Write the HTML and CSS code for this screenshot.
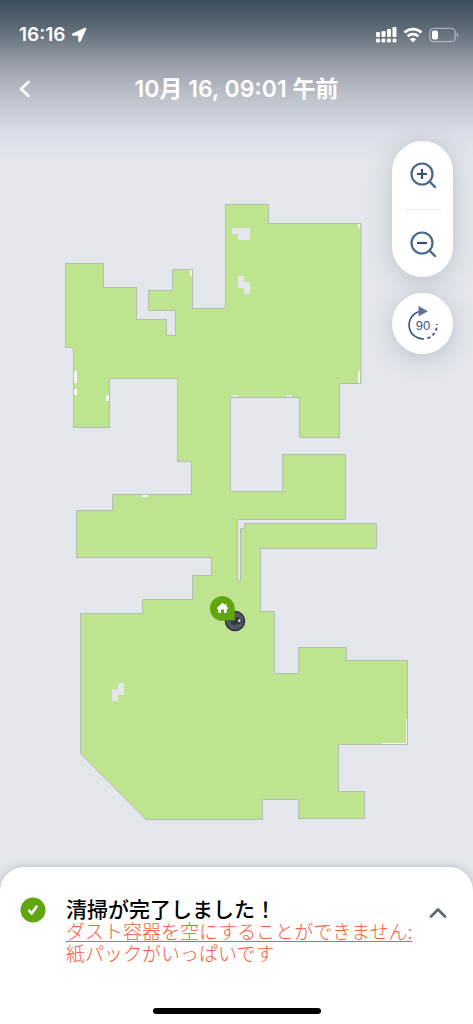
FILE: index.html
```html
<!DOCTYPE html>
<html lang="ja">
<head>
  <meta charset="UTF-8">
  <meta name="viewport" content="width=device-width, initial-scale=1">
  <title>清掃マップ</title>
  <link rel="stylesheet" href="styles.css">
</head>
<body>
  <div class="app">

    <header class="header">
      <div class="status">
        <div class="status-time">
          <span>16:16</span>
          <svg width="16" height="16" viewBox="0 0 16 16"><path d="M14 1 1.500 6.800Q.5 7.800 1.800 8.400H7.600V14.200Q8.400 15.600 9.300 14.400L15 2Q15.200.8 14 1Z" fill="#fff" stroke="#fff" stroke-width=".6"/></svg>
        </div>
        <div class="status-icons">
          <svg width="21" height="16" viewBox="0 0 21 16" fill="#fff">
            <rect x="0" y="5" width="4" height="5" rx="1"/>
            <rect x="5.500" y="4" width="4" height="6" rx="1"/>
            <rect x="11" y="2" width="4" height="8" rx="1"/>
            <rect x="16.500" y="0" width="4" height="10" rx="1"/>
            <rect x="0" y="11.500" width="4" height="4" rx="1.500"/>
            <rect x="5.500" y="11.500" width="4" height="4" rx="1.500"/>
            <rect x="11" y="11.500" width="4" height="4" rx="1.500"/>
            <rect x="16.500" y="11.500" width="4" height="4" rx="1.500"/>
          </svg>
          <svg width="20" height="16" viewBox="0 0 20 16" fill="none" stroke="#fff" stroke-width="2.800">
            <path d="M1.500 5.500a12.300 12.300 0 0 1 17 0"/>
            <path d="M4.700 9.200a7.800 7.800 0 0 1 10.600 0"/>
            <path d="M10 15.400 6.900 12.200a4.400 4.400 0 0 1 6.200 0z" fill="#fff" stroke="none"/>
          </svg>
          <svg width="30" height="16" viewBox="0 0 30 16">
            <rect x=".8" y="1.300" width="25.400" height="13.400" rx="4" fill="none" stroke="#fff" stroke-opacity=".45" stroke-width="1.300"/>
            <rect x="3" y="3.500" width="6" height="9" rx="1.800" fill="#fff"/>
            <path d="M27.800 5.600c1.800.6 1.800 4.200 0 4.800z" fill="#fff" fill-opacity=".5"/>
          </svg>
        </div>
      </div>
      <div class="title-bar">
        <button class="icon-btn back" aria-label="戻る">
          <svg width="12" height="18" viewBox="0 0 12 18"><path d="m9.500 2-7.500 7 7.500 7" fill="none" stroke="#fff" stroke-width="2.600" stroke-linecap="round" stroke-linejoin="round"/></svg>
        </button>
        <h1>10月 16, 09:01 午前</h1>
      </div>
    </header>

    <main class="map">
      <svg class="floor" viewBox="0 125 473 742" role="img" aria-label="清掃エリア">
        <!-- cleaned area -->
        <path class="area" d="M65.5 263.5H103.5V287.5H136.5V319.500H166.5V335.5H175.5V310.5H148.5V290.5H172.5V269.500H192.5V308.500H225.5V204.5H268.5V223.500H361V383.5H339.5V437.5H299.5V397.500H230.5V491.500H282.5V454.5H345.5V519.5H237.5V581H240.5V528.500H244.5V523.5H376.5V548.5H260.5V611.500H274.500V673.500H298.5V647.5H346.5V660.5H407.5V744.5H338.5V791.5H364.5V818.5H298.5V799.500H262.5V819.5H146L80.5 753.5V613.5H142.5V599.500H192.500V575.500H211.5V557.500H76.500V510.500H112.5V494.5H191.5V461.5H177.5V378.5H109.5V427.500H73.500V347.5H65.5Z"/>
        <!-- obstacles -->
        <g class="gap">
          <path d="M232 228H250V240H238V234H232Z"/>
          <path d="M238 276H244V282H250V294H244V288H238Z"/>
          <path d="M118 683H124V695H118V701H112V689H118Z"/>
          <path d="M232 395H238V397H232ZM286 395H292V397H286Z"/>
        </g>
        <!-- spots along the walls -->
        <path class="spot" d="M190 270H192V276H190ZM74 371H77V383H74ZM74 389H77V395H74ZM106 395H109V401H106ZM358 224H360V228H358ZM358 371H360V383H358ZM142 495H148V497H142ZM406 719H407V744H382V743H406Z"/>
        <!-- robot -->
        <circle cx="235" cy="621" r="9.600" fill="#4f5863" stroke="#292b38" stroke-width="1.400"/>
        <path d="M231 618.500Q237 615 242 619.500V622.500Q236 626.500 231 624Z" fill="#343941"/>
        <circle cx="239.300" cy="620.700" r="1.400" fill="#d5dce2"/>
        <!-- dock -->
        <path d="M234.700 620.700V608.500A12.400 12.400 0 1 0 226 620.300Q230 619.500 234.700 620.700Z" fill="#61a60e"/>
        <path d="M222.500 602.800 217 607.800V609H218.300V613H221V609.500H224V613H226.700V609H228V607.800L226.500 606.400V604H225V605.100Z" fill="#fff"/>
      </svg>

      <div class="controls">
        <div class="zoom">
          <button class="icon-btn" aria-label="拡大">
            <svg width="28" height="28" viewBox="0 0 28 28" fill="none" stroke="#49678a" stroke-width="2.200"><circle cx="13" cy="13" r="10.500"/><path d="m20.500 20.500 5.500 5.500" stroke-width="2.400" stroke-linecap="round"/><path d="M8 13h10M13 8v10" stroke="#34506f"/></svg>
          </button>
          <button class="icon-btn" aria-label="縮小">
            <svg width="28" height="28" viewBox="0 0 28 28" fill="none" stroke="#49678a" stroke-width="2.200"><circle cx="13" cy="13" r="10.500"/><path d="m20.500 20.500 5.500 5.500" stroke-width="2.400" stroke-linecap="round"/><path d="M8 13h10" stroke="#34506f"/></svg>
          </button>
        </div>
        <button class="icon-btn rotate" aria-label="90度回転">
          <svg width="32" height="36" viewBox="0 0 32 36">
            <path d="M12.500 5.500A14 14 0 0 0 17 33" fill="none" stroke="#2f527a" stroke-width="1.600"/>
            <path d="M20.500 32.400A14 14 0 0 0 29.800 18" fill="none" stroke="#2f527a" stroke-width="1.700" stroke-dasharray="3.200 2.600"/>
            <path d="M11.500 0v10.500l9.500-5.200z" fill="#5c7693"/>
            <text class="degrees" x="16" y="24" text-anchor="middle">90</text>
          </svg>
        </button>
      </div>
    </main>

    <section class="sheet">
      <div class="message">
        <svg class="check" width="26" height="26" viewBox="0 0 26 26"><circle cx="13" cy="13" r="12.500" fill="#61a60e"/><path d="m9.200 13.700 2.500 2.800 4.800-7" fill="none" stroke="#fff" stroke-width="2.600" stroke-linecap="round" stroke-linejoin="round"/></svg>
        <div class="message-text">
          <h2>清掃が完了しました！</h2>
          <p><a href="#">ダスト容器を空にすることができません:</a><br>紙パックがいっぱいです</p>
        </div>
        <button class="icon-btn expand" aria-label="詳細を開く">
          <svg width="18" height="12" viewBox="0 0 18 12"><path d="m2 9.500 7-7 7 7" fill="none" stroke="#5c6875" stroke-width="2.600" stroke-linecap="round" stroke-linejoin="round"/></svg>
        </button>
      </div>
      <div class="home-bar"></div>
    </section>

  </div>
</body>
</html>
```
FILE: styles.css
```css
* {
  box-sizing: border-box;
}

body {
  margin: 0;
  font-family: Inter, "Noto Sans CJK JP", sans-serif;
  background-color: #e3e7ec;
  color: #000;
}

h1, h2, p {
  margin: 0;
}

svg {
  display: block;
}

.app {
  min-height: 100vh;
  display: flex;
  flex-direction: column;
  background: linear-gradient(#3e4e5f 0, #56636f 22px, #727e89 42px, #9ba0ab 66px, #bcc1c9 96px, #d9dde6 132px, #e3e7ec 162px);
}

.icon-btn {
  display: flex;
  align-items: center;
  justify-content: center;
  padding: 0;
  border: none;
  background: none;
  cursor: pointer;
}

/* header */
.header {
  height: 125px;
  color: white;
}

.status {
  display: flex;
  justify-content: space-between;
  align-items: center;
  padding: 23px 14px 0 19px;
}

.status-time {
  display: flex;
  align-items: center;
  gap: 6px;
  font-size: 19px;
  line-height: 24px;
  font-weight: 600;
}

.status-icons {
  display: flex;
  align-items: center;
  gap: 6px;
}

.title-bar {
  display: grid;
  grid-template-columns: 32px 1fr 32px;
  align-items: center;
  margin-top: 26px;
  padding: 0 9px;
}

.back {
  width: 32px;
  height: 32px;
}

.title-bar h1 {
  font-size: 23px;
  line-height: 32px;
  font-weight: 600;
  text-align: center;
  white-space: nowrap;
}

/* map */
.map {
  position: relative;
}

.floor {
  width: 100%;
  height: auto;
}

.area {
  fill: #bee48f;
  stroke: #b0bfb0;
  stroke-width: 1;
}

.gap {
  fill: #e3e7ec;
}

.spot {
  fill: #f5f7f4;
}

.controls {
  position: absolute;
  top: 16px;
  right: 20px;
  display: flex;
  flex-direction: column;
  gap: 16px;
}

.zoom, .rotate {
  width: 61px;
  background-color: white;
  box-shadow: 0 4px 24px rgba(70, 85, 105, 0.25);
}

.zoom {
  padding: 0 12px;
  border-radius: 31px;
}

.zoom .icon-btn {
  width: 100%;
  height: 68px;
}

.zoom .icon-btn + .icon-btn {
  border-top: 1px solid #ececec;
}

.rotate {
  height: 61px;
  border-radius: 50%;
}

.degrees {
  font-size: 13px;
  font-weight: 300;
  fill: #3f5b7c;
}

/* bottom sheet */
.sheet {
  position: relative;
  flex: 1;
  display: flex;
  flex-direction: column;
  justify-content: space-between;
  padding: 32px 20px 10px;
  border-radius: 24px 24px 0 0;
  background-color: white;
  box-shadow: 0 0 8px rgba(70, 85, 105, 0.3);
}

.message {
  display: flex;
  align-items: flex-start;
}

.check {
  margin-top: -2px;
  flex: none;
}

.message-text {
  flex: 1;
  margin-left: 20px;
  white-space: nowrap;
}

.message h2 {
  font-size: 21px;
  line-height: 21px;
  font-weight: 500;
}

.message p {
  font-family: "Noto Sans CJK JP", sans-serif;
  font-size: 19px;
  line-height: 22px;
  font-weight: 300;
  color: #fb5a3a;
}

.message a {
  color: inherit;
  text-decoration-thickness: 1px;
  text-underline-offset: 2px;
}

.expand {
  width: 18px;
  height: 28px;
  margin-right: 6px;
}

.home-bar {
  width: 168px;
  height: 6px;
  margin: 0 auto;
  border-radius: 3px;
  background-color: black;
}
```
